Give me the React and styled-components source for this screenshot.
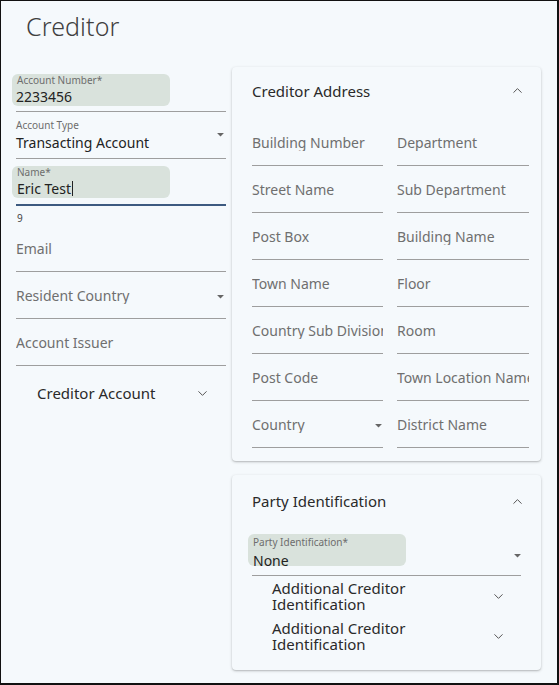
import React from 'react';
import styled, { createGlobalStyle } from 'styled-components';
import { ChevronDown, ChevronUp } from 'lucide-react';

const GlobalStyle = createGlobalStyle`
  html, body { margin: 0; padding: 0; }
  body {
    background: #f5f9fc;
    font-family: "Noto Sans", "Open Sans", sans-serif;
    color: #222;
  }
  * { box-sizing: border-box; }
`;

const Frame = styled.div`
  width: 559px;
  height: 685px;
  border-style: solid;
  border-color: #111;
  border-width: 1px 2px 2px 1px;
  background: #f5f9fc;
  overflow: hidden;
`;

const Title = styled.h1`
  margin: 0;
  padding: 8px 0 0 25px;
  height: 66px;
  font-size: 25px;
  font-weight: 300;
  color: #404040;
  letter-spacing: 0.1px;
`;

const Body = styled.div`
  display: flex;
  gap: 6px;
  padding-left: 15px;
`;

const LeftCol = styled.div`
  width: 210px;
  display: flex;
  flex-direction: column;
`;

const RightCol = styled.div`
  width: 309px;
  display: flex;
  flex-direction: column;
  gap: 14px;
`;

const Field = styled.div`
  position: relative;
  height: ${p => p.$h || 47}px;
  display: flex;
  flex-direction: column;
  justify-content: ${p => p.$align || 'center'};
  padding-top: ${p => p.$pt || 0}px;
  padding-bottom: 1px;
  border-bottom: ${p => (p.$focused ? '2px solid #3d5a80' : '1px solid #9e9e9e')};
`;

const Pill = styled.div`
  width: ${p => p.$w || 158}px;
  height: 32px;
  margin-left: -4px;
  padding: ${p => p.$top || 1}px 0 0 5px;
  background: #d9e2dc;
  border-radius: 6px;
  display: flex;
  flex-direction: column;
  gap: ${p => p.$gap || 2}px;
`;

const SmallLabel = styled.span`
  font-size: 10px;
  line-height: 11px;
  color: #6d6d6d;
`;

const Value = styled.span`
  font-size: 14px;
  line-height: 17px;
  color: #222;
  white-space: nowrap;
`;

const Placeholder = styled.span`
  font-size: 14px;
  line-height: 17px;
  color: #6f6f6f;
  white-space: nowrap;
  overflow: hidden;
  padding-right: ${p => (p.$select ? 18 : 0)}px;
`;

const Caret = styled.span`
  display: inline-block;
  width: 1px;
  height: 15px;
  background: #222;
  vertical-align: -2px;
  margin-left: 1px;
`;

const Helper = styled.div`
  font-size: 10px;
  color: #444;
  padding: 5px 0 0 1px;
  height: 19px;
`;

const ArrowBox = styled.svg`
  position: absolute;
  right: ${p => p.$right || 0}px;
  top: 50%;
  margin-top: ${p => p.$dy || -7}px;
  width: 15px;
  height: 15px;
  fill: #666;
`;

const DropArrow = props => (
  <ArrowBox viewBox="0 0 24 24" {...props}>
    <path d="M6.5 9.5l5.5 5.5 5.5-5.5z" />
  </ArrowBox>
);

const Expander = styled.div`
  display: flex;
  align-items: center;
  justify-content: space-between;
  padding: ${p => p.$pad || '0'};
  color: #2a2a2a;
  font-size: 15px;
  line-height: 16px;
  svg { color: #555; flex-shrink: 0; }
`;

const Card = styled.div`
  background: #f5f9fc;
  border-radius: 4px;
  box-shadow: 0 1px 3px rgba(0, 0, 0, 0.22), 0 1px 1px rgba(0, 0, 0, 0.08);
  padding: ${p => p.$pad};
  min-height: ${p => p.$min || 0}px;
`;

const CardHead = styled.div`
  display: flex;
  align-items: center;
  justify-content: space-between;
  height: ${p => p.$h}px;
  padding-bottom: ${p => p.$pb || 0}px;
  margin-right: ${p => p.$mr || 0}px;
  font-size: 15px;
  color: #2a2a2a;
  svg { color: #555; }
`;

const Grid = styled.div`
  display: grid;
  grid-template-columns: 131px 132px;
  column-gap: 14px;
`;

const SubItem = styled(Expander)`
  padding: 0 15px 0 20px;
  margin-top: ${p => p.$mt || 0}px;
`;

const addressFields = [
  ['Building Number', 'Department'],
  ['Street Name', 'Sub Department'],
  ['Post Box', 'Building Name'],
  ['Town Name', 'Floor'],
  ['Country Sub Division', 'Room'],
  ['Post Code', 'Town Location Name'],
  ['Country', 'District Name'],
];

const App = () => {
  return (
    <Frame>
      <GlobalStyle />
      <Title>Creditor</Title>
      <Body>
        <LeftCol>
          <Field $h={45} $align="flex-start" $pt={7}>
            <Pill>
              <SmallLabel>Account Number*</SmallLabel>
              <Value style={{ marginLeft: -1 }}>2233456</Value>
            </Pill>
          </Field>
          <Field $h={47} $pt={2}>
            <SmallLabel>Account Type</SmallLabel>
            <Value style={{ marginTop: 3 }}>Transacting Account</Value>
            <DropArrow $right={-2} $dy={-8} />
          </Field>
          <Field $h={47} $focused $align="flex-start" $pt={7}>
            <Pill $w={158}>
              <SmallLabel>Name*</SmallLabel>
              <Value>Eric Test<Caret /></Value>
            </Pill>
          </Field>
          <Helper>9</Helper>
          <Field $h={47} $pt={2}>
            <Placeholder>Email</Placeholder>
          </Field>
          <Field $h={47} $pt={2}>
            <Placeholder>Resident Country</Placeholder>
            <DropArrow $right={-2} $dy={-6} />
          </Field>
          <Field $h={47} $pt={2}>
            <Placeholder>Account Issuer</Placeholder>
          </Field>
          <Expander $pad="19px 16px 0 21px">
            <span>Creditor Account</span>
            <ChevronDown size={15} strokeWidth={1.6} />
          </Expander>
        </LeftCol>
        <RightCol>
          <Card $pad="0 12px 13px 20px">
            <CardHead $h={52} $pb={5} $mr={4}>
              <span>Creditor Address</span>
              <ChevronUp size={15} strokeWidth={1.6} />
            </CardHead>
            <Grid>
              {addressFields.flat().map(name => (
                <Field key={name} $h={47} $pt={2}>
                  <Placeholder $select={name === 'Country'}>{name}</Placeholder>
                  {name === 'Country' && <DropArrow $right={-3} $dy={-6} />}
                </Field>
              ))}
            </Grid>
          </Card>
          <Card $pad="0 20px 14px 20px" $min={195}>
            <CardHead $h={56} $pb={4} $mr={-4}>
              <span>Party Identification</span>
              <ChevronUp size={15} strokeWidth={1.6} />
            </CardHead>
            <Field $h={45} $align="flex-start" $pt={3}>
              <Pill $w={158} $top={3} $gap={4}>
                <SmallLabel>Party Identification*</SmallLabel>
                <Value>None</Value>
              </Pill>
              <DropArrow $right={-4} $dy={-5} />
            </Field>
            <SubItem $mt={4}>
              <span>Additional Creditor<br />Identification</span>
              <ChevronDown size={15} strokeWidth={1.6} />
            </SubItem>
            <SubItem $mt={8}>
              <span>Additional Creditor<br />Identification</span>
              <ChevronDown size={15} strokeWidth={1.6} />
            </SubItem>
          </Card>
        </RightCol>
      </Body>
    </Frame>
  );
};

export default App;
